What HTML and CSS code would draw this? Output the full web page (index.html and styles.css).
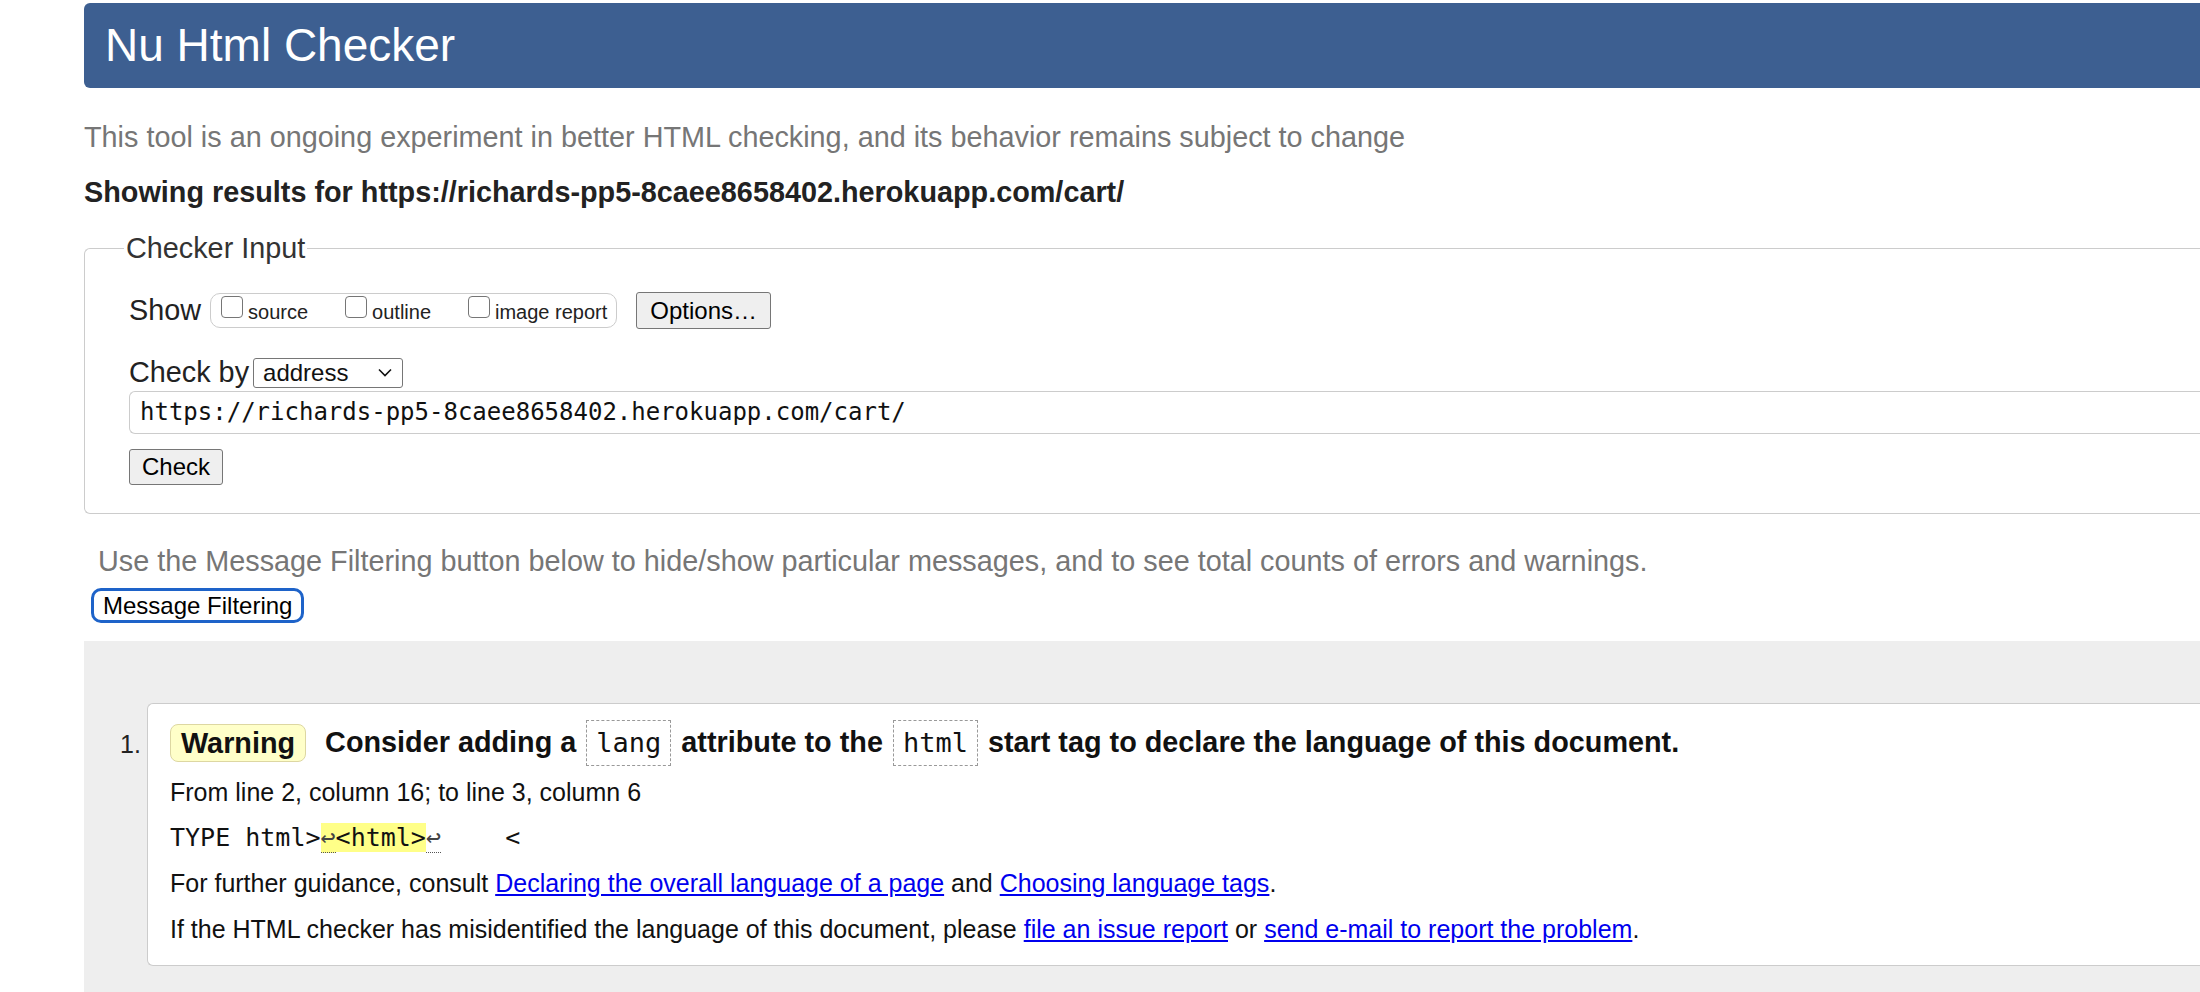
FILE: index.html
```html
<!DOCTYPE html>
<html lang="en">
<head>
<meta charset="utf-8">
<title>Nu Html Checker</title>
<link rel="stylesheet" href="styles.css">
</head>
<body>
<div class="page">
  <h1 class="masthead">Nu Html Checker</h1>
  <p class="intro">This tool is an ongoing experiment in better HTML checking, and its behavior remains subject to change</p>
  <p class="results-for">Showing results for https://richards-pp5-8caee8658402.herokuapp.com/cart/</p>

  <fieldset class="checker">
    <legend class="checker-legend">Checker Input</legend>
    <div class="row show-row">
      <span class="row-label">Show</span>
      <span class="check-group">
        <label class="check-item"><span class="box"></span>source</label>
        <label class="check-item"><span class="box"></span>outline</label>
        <label class="check-item"><span class="box"></span>image report</label>
      </span>
      <span class="btn options-btn">Options…</span>
    </div>
    <div class="row by-row">
      <span class="row-label">Check by</span>
      <span class="select">address<svg class="chev" viewBox="0 0 14 9" width="14" height="9"><path d="M1 1.5 L7 7.5 L13 1.5" fill="none" stroke="#111" stroke-width="1.6"/></svg></span>
    </div>
    <div class="url-input">https://richards-pp5-8caee8658402.herokuapp.com/cart/</div>
    <div class="row"><span class="btn check-btn">Check</span></div>
  </fieldset>

  <p class="filter-note">Use the Message Filtering button below to hide/show particular messages, and to see total counts of errors and warnings.</p>
  <div class="filter-wrap"><span class="filter-btn">Message Filtering</span></div>

  <div class="results">
    <ol class="msgs">
      <li class="msg">
        <p class="msg-head"><span class="badge">Warning</span><span class="msg-title">Consider adding a <code class="tok">lang</code> attribute to the <code class="tok">html</code> start tag to declare the language of this document.</span></p>
        <p class="msg-line">From line 2, column 16; to line 3, column 6</p>
        <p class="msg-extract"><code>TYPE html&gt;<span class="lf">↩</span><mark class="hl">&lt;html&gt;</mark><span class="lf lf2">↩</span>    &lt;</code></p>
        <p class="msg-line">For further guidance, consult <a href="#">Declaring the overall language of a page</a> and <a href="#">Choosing language tags</a>.</p>
        <p class="msg-line">If the HTML checker has misidentified the language of this document, please <a href="#">file an issue report</a> or <a href="#">send e-mail to report the problem</a>.</p>
      </li>
    </ol>
  </div>
</div>
</body>
</html>
```
FILE: styles.css
```css
html, body {
  margin: 0;
  padding: 0;
  background: #fff;
  overflow: hidden;
}
body {
  font-family: "Liberation Sans", Arial, Helvetica, sans-serif;
  font-size: 25px;
  color: #111;
}
.page {
  width: 2300px;
  padding: 3px 0 0 84px;
}
.masthead {
  margin: 0;
  height: 85px;
  line-height: 85px;
  background: #3d5f91;
  color: #fff;
  font-weight: normal;
  font-size: 46px;
  padding-left: 21px;
  border-radius: 6px 0 0 6px;
}
.intro {
  margin: 31px 0 0;
  font-size: 28.8px;
  line-height: 36px;
  color: #767676;
}
.results-for {
  margin: 19px 0 0;
  font-size: 28.8px;
  line-height: 36px;
  font-weight: bold;
  color: #222;
}
.checker {
  margin: 23px 0 0;
  padding: 8px 0 28px 44px;
  border: 1px solid #ccc;
  border-radius: 6px 0 0 6px;
  border-right: none;
}
.checker-legend {
  padding: 0 2px;
  margin-left: -5px;
  font-size: 28.8px;
  color: #333;
  line-height: 30px;
}
.row {
  display: flex;
  align-items: center;
}
.row-label {
  font-size: 28.8px;
  color: #222;
}
.show-row {
  margin-top: 21px;
  height: 37px;
}
.check-group {
  display: flex;
  align-items: flex-start;
  margin-left: 9px;
  height: 35px;
  box-sizing: border-box;
  border: 1px solid #ccc;
  border-radius: 10px;
  padding: 0 9px 0 10px;
  gap: 37px;
}
.check-item {
  display: flex;
  align-items: flex-start;
  font-size: 20px;
  color: #222;
  line-height: 33px;
  padding-top: 2px;
}
.box {
  width: 22px;
  height: 22px;
  box-sizing: border-box;
  border: 1px solid #767676;
  border-radius: 4px;
  margin: 0 5px 0 0;
  background: #fff;
}
.btn {
  display: inline-flex;
  align-items: center;
  background: #efefef;
  border: 1px solid #767676;
  border-radius: 3px;
  font-size: 24px;
  color: #000;
  box-sizing: border-box;
}
.options-btn {
  margin-left: 19px;
  height: 37px;
  padding: 0 13px;
}
.by-row {
  margin-top: 28px;
  height: 31px;
}
.select {
  display: inline-flex;
  align-items: center;
  margin-left: 4px;
  width: 150px;
  height: 30px;
  box-sizing: border-box;
  border: 1px solid #767676;
  border-radius: 3px;
  padding: 0 10px 0 9px;
  font-size: 24px;
  justify-content: space-between;
  background: #fff;
}
.chev { display: block; }
.url-input {
  margin-top: 3px;
  height: 43px;
  box-sizing: border-box;
  border: 1px solid #ccc;
  border-right: none;
  border-radius: 6px 0 0 6px;
  padding-left: 10px;
  font-family: "DejaVu Sans Mono", Menlo, monospace;
  font-size: 24px;
  line-height: 41px;
  color: #111;
}
.check-btn {
  margin-top: 15px;
  height: 36px;
  padding: 0 12px;
}
.filter-note {
  margin: 29px 0 0 14px;
  font-size: 28.8px;
  line-height: 36px;
  color: #767676;
}
.filter-wrap {
  margin: 9px 0 0 7px;
  height: 35px;
}
.filter-btn {
  display: inline-block;
  height: 35px;
  box-sizing: border-box;
  border: 3px solid #1e63c9;
  border-radius: 10px;
  padding: 0 9px;
  font-size: 24px;
  line-height: 29px;
  color: #000;
  background: #fff;
}
.results {
  margin-top: 18px;
  background: #eee;
  padding: 62px 0 60px 63px;
}
.msgs {
  margin: 0;
  padding: 0;
  list-style: none;
  counter-reset: m;
}
.msg {
  position: relative;
  counter-increment: m;
  background: #fff;
  border: 1px solid #ccc;
  border-right: none;
  border-radius: 6px 0 0 6px;
  padding: 19px 0 13px 22px;
}
.msg::before {
  content: counter(m) ".";
  position: absolute;
  left: -28px;
  top: 26px;
  font-size: 25px;
  color: #222;
}
.msg p { margin: 0; }
.msg-head {
  display: flex;
  align-items: center;
  height: 40px;
}
.badge {
  display: inline-block;
  background: #ffffc9;
  border: 1px solid #ddd7a2;
  border-radius: 8px;
  padding: 0 10px;
  height: 38px;
  line-height: 36px;
  box-sizing: border-box;
  font-weight: bold;
  font-size: 28.8px;
}
.msg-title {
  margin-left: 19px;
  font-weight: bold;
  font-size: 28.8px;
}
.tok {
  display: inline-block;
  vertical-align: baseline;
  font-family: "DejaVu Sans Mono", Menlo, monospace;
  font-weight: normal;
  font-size: 27px;
  border: 1px dashed #999;
  padding: 0 9px;
  line-height: 44px;
  margin: 0 2px;
}
.msg-line {
  font-size: 25px;
  line-height: 46px;
  color: #111;
}
.msg-line:nth-of-type(2) { margin-top: 6px; }
.msg-extract {
  font-family: "DejaVu Sans Mono", Menlo, monospace;
  font-size: 25px;
  line-height: 45px;
  white-space: pre;
}
.msg-extract code { font-family: inherit; }
.hl {
  background: #ffff88;
  color: #111;
}
.lf {
  color: #444;
  border-bottom: 1px dotted #555;
}
.lf:first-child { background: #ffff88; }
.lf2 { margin-right: 4px; }
a {
  color: #0000ee;
  text-decoration: underline;
}
```
